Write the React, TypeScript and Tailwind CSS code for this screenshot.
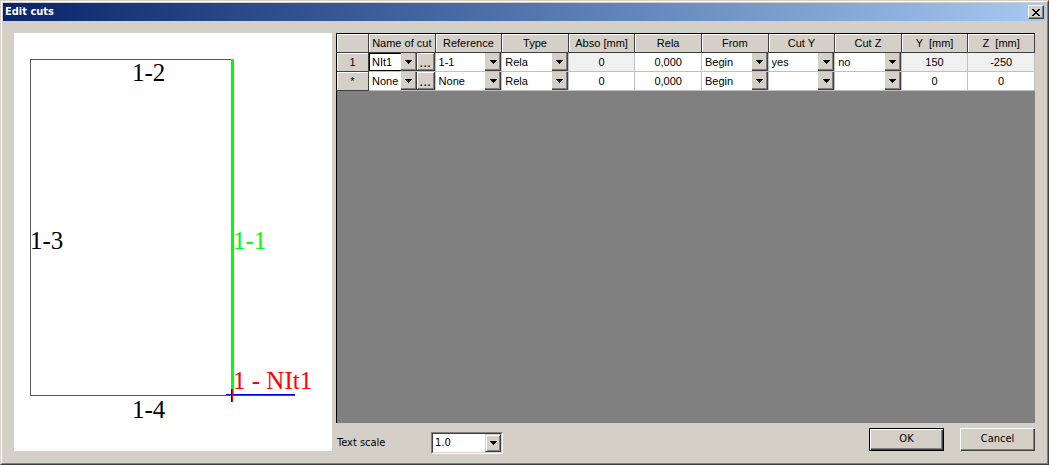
import React from "react";
import type { ReactNode } from "react";

const uiFont = "font-['DejaVu_Sans_Condensed','DejaVu_Sans',sans-serif]";

const columns = [
  "Name of cut",
  "Reference",
  "Type",
  "Abso [mm]",
  "Rela",
  "From",
  "Cut Y",
  "Cut Z",
  "Y  [mm]",
  "Z  [mm]",
];

type Row = {
  id: string;
  name: string;
  reference: string;
  type: string;
  abso: string;
  rela: string;
  from: string;
  cutY: string;
  cutZ: string;
  y: string;
  z: string;
  locked: boolean;
};

const rows: Row[] = [
  { id: "1", name: "NIt1", reference: "1-1", type: "Rela", abso: "0", rela: "0,000", from: "Begin", cutY: "yes", cutZ: "no", y: "150", z: "-250", locked: true },
  { id: "*", name: "None", reference: "None", type: "Rela", abso: "0", rela: "0,000", from: "Begin", cutY: "", cutZ: "", y: "0", z: "0", locked: false },
];

function Arrow() {
  return (
    <svg width="7" height="4" viewBox="0 0 7 4" shapeRendering="crispEdges" aria-hidden="true">
      <path d="M0 0H7V1H6V2H5V3H4V4H3V3H2V2H1V1H0Z" fill="#000" />
    </svg>
  );
}

function CellSelect({ label, value, options, active = false }: { label: string; value: string; options: string[]; active?: boolean }) {
  return (
    <div className="relative flex h-[18px] min-w-0 flex-1">
      <select
        aria-label={label}
        defaultValue={value}
        className={`h-full w-full appearance-none rounded-none pr-4 outline-none ${active ? "border border-black pl-[2px]" : "bg-white pl-[3px]"}`}
      >
        {options.map((o) => (
          <option key={o}>{o}</option>
        ))}
      </select>
      <span className="pointer-events-none absolute inset-y-0 right-0 flex w-4 items-center justify-center border-r border-b border-[#404040] bg-[#d4d0c8] pl-px shadow-[inset_-1px_-1px_#808080]">
        <Arrow />
      </span>
    </div>
  );
}

function NumberCell({ label, value, locked = false }: { label: string; value: string; locked?: boolean }) {
  return (
    <Cell>
      <input
        aria-label={label}
        defaultValue={value}
        readOnly={locked}
        className={`block h-[18px] w-full text-center outline-none ${locked ? "bg-[#f0f0f0]" : "bg-white"}`}
      />
    </Cell>
  );
}

function Cell({ children }: { children: ReactNode }) {
  return <td className="h-[19px] border-r border-b border-[#c0c0c0] bg-white p-0">{children}</td>;
}

const headCell =
  "h-[19px] border-r border-b border-[#404040] bg-[#d4d0c8] p-0 text-center font-normal whitespace-pre shadow-[inset_1px_1px_#fff]";

function CutsTable() {
  return (
    <table className="w-full table-fixed border-separate border-spacing-0 font-['Liberation_Sans',Arial,sans-serif] text-[11px] leading-4">
      <colgroup>
        <col className="w-8" />
        {columns.map((c) => (
          <col key={c} />
        ))}
      </colgroup>
      <thead>
        <tr>
          <td className={headCell} />
          {columns.map((c) => (
            <th key={c} scope="col" className={headCell}>
              {c}
            </th>
          ))}
        </tr>
      </thead>
      <tbody>
        {rows.map((r) => (
          <tr key={r.id}>
            <th scope="row" className={headCell}>
              {r.id}
            </th>
            <Cell>
              <div className="flex">
                <CellSelect label="Name of cut" value={r.name} options={["None", "NIt1"]} active={r.locked} />
                <button
                  type="button"
                  aria-label="Browse cuts"
                  className="h-[18px] w-[18px] border-r border-b border-[#404040] bg-[#d4d0c8] text-sm leading-4 shadow-[inset_1px_1px_#fff,inset_-1px_-1px_#808080]"
                >
                  ...
                </button>
              </div>
            </Cell>
            <Cell>
              <CellSelect label="Reference" value={r.reference} options={["None", "1-1", "1-2", "1-3", "1-4"]} />
            </Cell>
            <Cell>
              <CellSelect label="Type" value={r.type} options={["Rela", "Abso"]} />
            </Cell>
            <NumberCell label="Abso [mm]" value={r.abso} locked={r.locked} />
            <NumberCell label="Rela" value={r.rela} />
            <Cell>
              <CellSelect label="From" value={r.from} options={["Begin", "End"]} />
            </Cell>
            <Cell>
              <CellSelect label="Cut Y" value={r.cutY} options={["", "yes", "no"]} />
            </Cell>
            <Cell>
              <CellSelect label="Cut Z" value={r.cutZ} options={["", "yes", "no"]} />
            </Cell>
            <NumberCell label="Y [mm]" value={r.y} locked={r.locked} />
            <NumberCell label="Z [mm]" value={r.z} locked={r.locked} />
          </tr>
        ))}
      </tbody>
    </table>
  );
}

function Preview() {
  return (
    <svg viewBox="0 0 318 418" className="h-[418px] w-[318px] shrink-0 bg-white font-['Liberation_Serif','Times_New_Roman',serif] text-[25px]">
      <g shapeRendering="crispEdges">
        <path d="M217 26.5H16.5V362.5H217" fill="none" stroke="#585858" />
        <rect x="217" y="26" width="3" height="335" fill="#0f0" />
        <rect x="212" y="361" width="69" height="1" fill="#00f" />
        <rect x="217" y="362" width="64" height="1" fill="#f00" />
        <rect x="217" y="356" width="1" height="13" fill="#00f" />
        <rect x="218" y="356" width="1" height="13" fill="#f00" />
      </g>
      <text x="118" y="48">1-2</text>
      <text x="118" y="385">1-4</text>
      <text x="16" y="216">1-3</text>
      <text x="219" y="216" fill="#0f0">1-1</text>
      <text x="219" y="356" fill="#f00">1 - NIt1</text>
    </svg>
  );
}

export default function App() {
  return (
    <main className={`flex min-h-screen flex-col border border-t-[#d4d0c8] border-r-[#404040] border-b-[#404040] border-l-[#d4d0c8] bg-[#d4d0c8] text-[11px] text-black ${uiFont}`}>
      <div className="flex flex-1 flex-col border border-t-white border-r-[#808080] border-b-[#808080] border-l-white p-px">
        <header className="flex h-[18px] items-center justify-between bg-linear-to-r from-[#0a246a] to-[#a6caf0] px-0.5">
          <h1 className="font-bold text-white">Edit cuts</h1>
          <button
            type="button"
            aria-label="Close"
            className="flex h-3.5 w-4 items-center justify-center border border-t-white border-r-[#404040] border-b-[#404040] border-l-white bg-[#d4d0c8] shadow-[inset_-1px_-1px_#808080]"
          >
            <svg width="8" height="7" viewBox="0 0 8 7" shapeRendering="crispEdges" aria-hidden="true">
              <path d="M0 0h2v1h1v1h2V1h1V0h2v1H7v1H6v1H5v1h1v1h1v1h1v1H6V6H5V5H3v1H2v1H0V6h1V5h1V4h1V3H2V2H1V1H0z" fill="#000" />
            </svg>
          </button>
        </header>
        <div className="flex flex-1 gap-1 px-[11px] pt-3 pb-2">
          <Preview />
          <div className="flex min-w-0 flex-1 flex-col">
            <div className="flex-1 border-t border-l border-black bg-[#808080]">
              <CutsTable />
            </div>
            <div className="flex items-start pt-[5px] pl-px">
              <label htmlFor="text-scale" className="w-[94px] pt-[7px] leading-4">
                Text scale
              </label>
              <div className="relative mt-1 h-[22px] w-[72px] border border-t-[#808080] border-r-white border-b-white border-l-[#808080]">
                <select
                  id="text-scale"
                  defaultValue="1.0"
                  className="block h-full w-full appearance-none rounded-none border border-t-[#404040] border-r-[#d4d0c8] border-b-[#d4d0c8] border-l-[#404040] bg-white pl-0.5 outline-none"
                >
                  <option>0.5</option>
                  <option>1.0</option>
                  <option>2.0</option>
                </select>
                <span className="pointer-events-none absolute inset-y-px right-px flex w-4 items-center justify-center border border-t-[#d4d0c8] border-r-[#404040] border-b-[#404040] border-l-[#d4d0c8] bg-[#d4d0c8] shadow-[inset_1px_1px_#fff,inset_-1px_-1px_#808080]">
                  <Arrow />
                </span>
              </div>
              <div className="ml-auto flex gap-4">
                <button type="button" className="h-[23px] w-[75px] border border-black bg-[#d4d0c8] shadow-[inset_1px_1px_#fff,inset_-1px_-1px_#404040,inset_-2px_-2px_#808080]">
                  OK
                </button>
                <button type="button" className="h-[23px] w-[75px] bg-[#d4d0c8] shadow-[inset_1px_1px_#fff,inset_-1px_-1px_#404040,inset_-2px_-2px_#808080]">
                  Cancel
                </button>
              </div>
            </div>
          </div>
        </div>
      </div>
    </main>
  );
}
